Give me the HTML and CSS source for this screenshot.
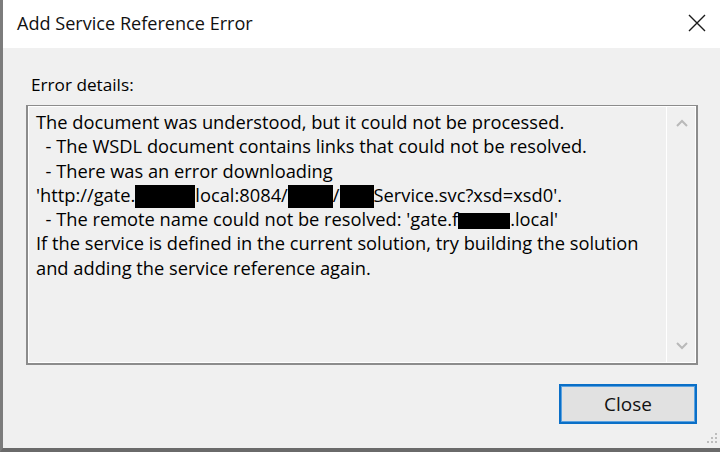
FILE: index.html
```html
<!DOCTYPE html>
<html>
<head>
<meta charset="utf-8">
<link rel="stylesheet" href="styles.css">
</head>
<body>
<div class="window">
  <div class="titlebar">
    <span class="title">Add Service Reference Error</span>
    <svg class="close-x" width="18" height="18" viewBox="0 0 18 18"><path d="M1 1 L17 17 M17 1 L1 17" stroke="#1b1b1b" stroke-width="1.4" fill="none"/></svg>
  </div>
  <div class="content">
    <div class="label">Error details:</div>
    <div class="textbox">
      <div class="text">
        <div class="line">The document was understood, but it could not be processed.</div>
        <div class="line">  - The WSDL document contains links that could not be resolved.</div>
        <div class="line">  - There was an error downloading</div>
        <div class="line">'http://gate.<span class="redact r1"></span>local:8084/<span class="redact r2"></span>/<span class="redact r3"></span>Service.svc?xsd=xsd0'.</div>
        <div class="line">  - The remote name could not be resolved: 'gate.f<span class="redact r4"></span>.local'</div>
        <div class="line">If the service is defined in the current solution, try building the solution</div>
        <div class="line">and adding the service reference again.</div>
      </div>
      <div class="scrollbar">
        <svg width="14" height="10" viewBox="0 0 14 10"><path d="M2 8 L7 3 L12 8" stroke="#b9b9b9" stroke-width="2" fill="none"/></svg>
        <svg width="14" height="10" viewBox="0 0 14 10"><path d="M2 2 L7 7 L12 2" stroke="#b9b9b9" stroke-width="2" fill="none"/></svg>
      </div>
    </div>
    <div class="footer">
      <button class="btn">Close</button>
    </div>
  </div>
  <svg class="grip" width="14" height="14" viewBox="0 0 14 14">
    <g fill="#bdbdbd">
      <rect x="10" y="2" width="2" height="2"/>
      <rect x="6" y="6" width="2" height="2"/><rect x="10" y="6" width="2" height="2"/>
      <rect x="2" y="10" width="2" height="2"/><rect x="6" y="10" width="2" height="2"/><rect x="10" y="10" width="2" height="2"/>
    </g>
  </svg>
</div>
</body>
</html>
```
FILE: styles.css
```css
html, body {
  margin: 0;
  padding: 0;
}
body {
  width: 720px;
  height: 452px;
  overflow: hidden;
  font-family: "Open Sans", "Noto Sans", sans-serif;
  color: #000;
}
.window {
  position: relative;
  box-sizing: border-box;
  width: 720px;
  height: 452px;
  border-left: 3px solid #7c7c7c;
  border-bottom: 4px solid #6a6a6a;
  display: flex;
  flex-direction: column;
  background: #f0f0f0;
  overflow: hidden;
}
.titlebar {
  height: 48px;
  flex: none;
  background: #ffffff;
  display: flex;
  align-items: center;
  justify-content: space-between;
  padding: 0 14px 0 14px;
}
.title {
  font-size: 18.1px;
  color: #111;
  margin-top: -2px;
}
.close-x {
  margin-top: -2px;
}
.content {
  flex: 1;
  display: flex;
  flex-direction: column;
  padding: 25px 22px 0 23px;
}
.label {
  font-size: 17.2px;
  line-height: 24px;
  padding-left: 5px;
  margin-bottom: 8px;
}
.textbox {
  height: 260px;
  flex: none;
  box-sizing: border-box;
  border: 2px solid #8c8c8c;
  border-top-width: 1px;
  box-shadow: inset 1px 1px 0 #ffffff, inset -1px -1px 0 #ffffff;
  display: flex;
  overflow: hidden;
}
.text {
  flex: 1;
  padding: 4px 0 0 8px;
  font-size: 18.3px;
  line-height: 24.3px;
}
.line {
  white-space: pre;
  height: 24.3px;
}
.redact {
  display: inline-block;
  background: #000;
  height: 23px;
  vertical-align: -6px;
}
.r1 { width: 60px; }
.r2 { width: 45px; }
.r3 { width: 34px; }
.r4 { width: 52px; height: 16px; vertical-align: -3px; }
.scrollbar {
  width: 29px;
  border-left: 1px solid #ffffff;
  display: flex;
  flex-direction: column;
  justify-content: space-between;
  align-items: center;
  padding: 12px 0 12px;
}
.footer {
  display: flex;
  justify-content: flex-end;
  padding-top: 19px;
}
.btn {
  width: 138px;
  height: 40px;
  box-sizing: border-box;
  border: 2px solid #0a6fc7;
  outline: none;
  background: #e1e1e1;
  box-shadow: inset 0 0 0 1px #5ba2e0;
  font-family: "Open Sans", "Noto Sans", sans-serif;
  font-size: 19px;
  color: #111;
  padding: 0;
  margin-right: 1px;
}
.grip {
  position: absolute;
  right: 1px;
  bottom: 3px;
}
```
